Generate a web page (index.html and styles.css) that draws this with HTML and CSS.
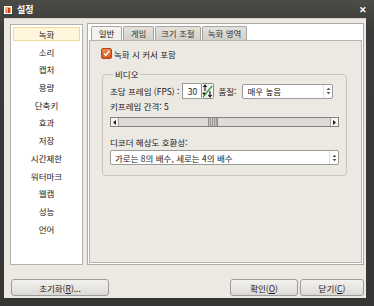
FILE: index.html
```html
<!DOCTYPE html>
<html lang="ko">
<head>
    <meta charset="UTF-8">
    <title>설정</title>
    <link rel="stylesheet" href="styles.css">
</head>
<body>
    <div class="window">
        <div class="titlebar">
            <span class="app-icon">
                <svg width="8" height="8" viewBox="0 0 8 8">
                    <rect x="0.5" y="0.5" width="7" height="7" fill="#f3b27a" stroke="#fff"/>
                    <rect x="4" y="2" width="2" height="5" fill="#d8361c"/>
                    <rect x="2" y="4" width="1" height="3" fill="#e86a2a"/>
                </svg>
            </span>
            <span class="title">설정</span>
            <span class="close">✕</span>
        </div>
        <div class="client">
            <div class="main">
                <ul class="menu">
                    <li class="active">녹화</li>
                    <li>소리</li>
                    <li>캡처</li>
                    <li>용량</li>
                    <li>단축키</li>
                    <li>효과</li>
                    <li>저장</li>
                    <li>시간제한</li>
                    <li>워터마크</li>
                    <li>웹캠</li>
                    <li>성능</li>
                    <li>언어</li>
                </ul>
                <div class="tabs">
                    <div class="tab-row">
                        <span class="tab active">일반</span>
                        <span class="tab">게임</span>
                        <span class="tab">크기 조절</span>
                        <span class="tab">녹화 영역</span>
                    </div>
                    <div class="page">
                        <label class="check">
                            <span class="box">
                                <svg width="9" height="9" viewBox="0 0 9 9">
                                    <path d="M2 4.5 L3.8 6.5 L7.2 2" fill="none" stroke="#fff" stroke-width="1.4"/>
                                </svg>
                            </span>
                            녹화 시 커서 포함
                        </label>
                        <fieldset class="group">
                            <legend>비디오</legend>
                            <div class="row">
                                <span class="label">초당 프레임 (FPS) :</span>
                                <span class="num">30</span>
                                <span class="spin">
                                    <svg width="13" height="16" viewBox="0 0 13 16">
                                        <rect x="0.5" y="0.5" width="12" height="15" rx="1" fill="#f4f3f0" stroke="#8a8a88"/>
                                        <path d="M2 14 L11 3" stroke="#2f9a3a" stroke-width="1.3"/>
                                        <path d="M4 2 L4 8 M2.3 4 L4 2 L5.7 4" fill="none" stroke="#111" stroke-width="1.1"/>
                                        <path d="M9 8 L9 14 M7.3 12 L9 14 L10.7 12" fill="none" stroke="#111" stroke-width="1.1"/>
                                        <path d="M1.5 10.5 H4.5 M3 9 V12" stroke="#111" stroke-width="0.9"/>
                                    </svg>
                                </span>
                                <span class="label quality">품질:</span>
                                <span class="select short">
                                    매우 높음
                                    <span class="arrows">
                                        <svg width="5" height="8" viewBox="0 0 5 8">
                                            <path d="M0.5 3 L2.5 0.8 L4.5 3 Z M0.5 5 L2.5 7.2 L4.5 5 Z" fill="#555"/>
                                        </svg>
                                    </span>
                                </span>
                            </div>
                            <div class="text">키프레임 간격: 5</div>
                            <div class="slider">
                                <span class="step left">
                                    <svg width="3" height="5" viewBox="0 0 3 5"><path d="M3 0 L0 2.5 L3 5 Z" fill="#222"/></svg>
                                </span>
                                <span class="track">
                                    <span class="thumb"></span>
                                </span>
                                <span class="step right">
                                    <svg width="3" height="5" viewBox="0 0 3 5"><path d="M0 0 L3 2.5 L0 5 Z" fill="#222"/></svg>
                                </span>
                            </div>
                            <div class="text decoder">디코더 해상도 호환성:</div>
                            <div class="select wide">
                                가로는 8의 배수, 세로는 4의 배수
                                <span class="arrows">
                                    <svg width="5" height="8" viewBox="0 0 5 8">
                                        <path d="M0.5 3 L2.5 0.8 L4.5 3 Z M0.5 5 L2.5 7.2 L4.5 5 Z" fill="#555"/>
                                    </svg>
                                </span>
                            </div>
                        </fieldset>
                    </div>
                </div>
            </div>
            <div class="buttons">
                <button class="btn reset">초기화(<u>R</u>)...</button>
                <span class="spacer"></span>
                <button class="btn ok">확인(<u>O</u>)</button>
                <button class="btn close-btn">닫기(<u>C</u>)</button>
            </div>
        </div>
    </div>
</body>
</html>
```

FILE: styles.css
```css
* {
    box-sizing: border-box;
}

body {
    margin: 0;
    background: #3c3c3a;
    font-family: "Noto Sans CJK KR", "Noto Sans", sans-serif;
    font-size: 8.5px;
    color: #1a1a1a;
}

.window {
    width: 374px;
    height: 306px;
    display: flex;
    flex-direction: column;
    background: linear-gradient(#4b4b48, #3a3a38 30px, #363634);
}

.titlebar {
    height: 18px;
    flex-shrink: 0;
    display: flex;
    align-items: center;
    padding: 0 7px 0 4px;
    color: #fff;
}

.app-icon {
    display: flex;
    margin-right: 5px;
    margin-top: 1px;
}

.title {
    font-weight: bold;
    font-size: 9px;
    flex: 1;
}

.close {
    font-size: 9px;
    font-weight: bold;
}

.client {
    flex: 1;
    margin: 0 8px 8px 4px;
    background: #ece9e3;
    border-top: 1px solid #d8d4cc;
    padding: 5px 2px 0 6px;
    display: flex;
    flex-direction: column;
}

.main {
    display: flex;
    gap: 4px;
    height: 241px;
}

.menu {
    list-style: none;
    margin: 0;
    padding: 2px 2px 0;
    width: 73px;
    flex-shrink: 0;
    background: #fff;
    border: 1px solid #b4b1aa;
}

.menu li {
    height: 14px;
    line-height: 12px;
    margin-bottom: 3.7px;
    text-align: center;
    border: 1px solid transparent;
}

.menu li.active {
    background: #fff6dd;
    border-color: #f2d995;
}

.tabs {
    flex: 1;
    min-width: 0;
    display: flex;
    flex-direction: column;
    background: #fff;
    border: 1px solid #aeaba4;
    margin-top: -1px;
    padding: 1px;
}

.tab-row {
    display: flex;
    height: 15px;
    padding: 1px 0 0 2px;
}

.tab {
    height: 14px;
    line-height: 13px;
    padding: 0 5px;
    border: 1px solid #a9a6a0;
    border-bottom: none;
    border-radius: 2px 2px 0 0;
    background: linear-gradient(#e4e2dd, #d3d0ca);
    margin-right: 1px;
    color: #333;
}

.tab:first-child,
.tab:nth-child(2) {
    width: 31px;
    text-align: center;
}

.tab.active {
    background: #f4f2ee;
    color: #111;
}

.page {
    flex: 1;
    background: #ece9e3;
    border: 1px solid #b8b5ae;
    padding: 7px 15px 0 10px;
}

.check {
    display: flex;
    align-items: center;
    gap: 2px;
    height: 11px;
    margin-left: 1px;
}

.box {
    width: 11px;
    height: 11px;
    border: 1px solid #b2461a;
    border-radius: 2px;
    background: linear-gradient(#f0874a, #d9561e);
    display: flex;
}

.group {
    min-width: 0;
    width: 245px;
    margin: 9px 0 0 2px;
    padding: 3px 7px 10px 7px;
    border: 1px solid #c9c5bd;
    border-radius: 4px;
}

.group legend {
    padding: 0 2px;
    margin-left: 3px;
    line-height: 12px;
}

.row {
    display: flex;
    align-items: center;
    height: 16px;
    white-space: nowrap;
}

.num {
    width: 19px;
    height: 16px;
    line-height: 14px;
    margin-left: 3px;
    background: #fff;
    border: 1px solid #9c9a96;
    border-right: none;
    text-align: center;
}

.spin {
    display: flex;
}

.quality {
    margin: 0 6px 0 4px;
}

.select {
    display: flex;
    align-items: center;
    height: 15px;
    padding-left: 4px;
    background: #fff;
    border: 1px solid #9c9a96;
    border-radius: 2px;
}

.select.short {
    width: 91px;
}

.select.wide {
    width: 229px;
    margin-top: 2px;
}

.arrows {
    margin-left: auto;
    width: 9px;
    height: 13px;
    display: flex;
    align-items: center;
    justify-content: center;
    border-left: 1px solid #e2e0dc;
}

.text {
    height: 12px;
    line-height: 12px;
    margin-top: 1px;
}

.decoder {
    margin-top: 9px;
}

.slider {
    display: flex;
    width: 229px;
    height: 10px;
    margin-top: 5px;
    border: 1px solid #838280;
    background: #dedcd8;
}

.step {
    width: 8px;
    flex-shrink: 0;
    background: #f6f5f3;
    display: flex;
    align-items: center;
    justify-content: center;
}

.step.left {
    border-right: 1px solid #a5a39f;
}

.step.right {
    border-left: 1px solid #a5a39f;
}

.track {
    flex: 1 1 0;
    min-width: 0;
    display: flex;
    padding-left: 89px;
}

.thumb {
    width: 10px;
    background: repeating-linear-gradient(90deg, #c4c2be 0 1px, #a2a09c 1px 2px);
    border-left: 1px solid #8f8d89;
    border-right: 1px solid #8f8d89;
}

.buttons {
    display: flex;
    gap: 2px;
    margin-top: 14px;
    padding-left: 1px;
}

.spacer {
    flex: 1;
}

.btn {
    height: 17px;
    padding: 0;
    font-family: inherit;
    font-size: 8.5px;
    color: #1a1a1a;
    background: linear-gradient(#f3f2f0, #dcdad6);
    border: 1px solid #9e9c98;
    border-radius: 3px;
}

.btn u {
    text-decoration: underline;
}

.reset {
    width: 98px;
}

.ok {
    width: 68px;
}

.close-btn {
    width: 64px;
}
```
